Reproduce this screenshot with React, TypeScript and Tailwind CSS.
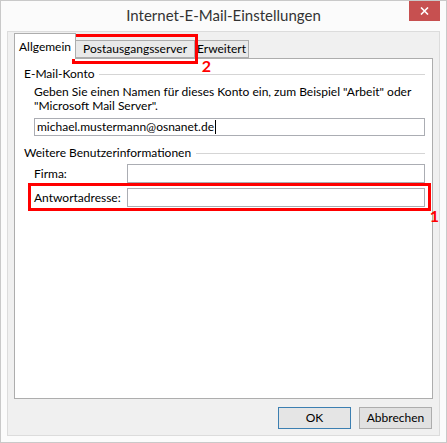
import React from "react";

const font = { fontFamily: '"Segoe UI", Lato, "Noto Sans", sans-serif' };

function GroupTitle({ label }: { label: string }) {
  return (
    <div className="flex h-[16px] items-center gap-[5px]">
      <span>{label}</span>
      <div className="h-px flex-1 bg-[#d5d5d5]" />
    </div>
  );
}

export default function App() {
  return (
    <div
      className="flex h-[443px] w-[447px] flex-col border border-[#c9c9c9] bg-[#fbfbfb] text-[12px] leading-[14px] text-black"
      style={font}
    >
      {/* title bar */}
      <div className="relative flex h-[30px] shrink-0 items-center justify-center">
        <span className="pb-[2px] text-[15px] text-[#333]">Internet-E-Mail-Einstellungen</span>
        <button className="absolute right-[6px] top-0 flex h-[20px] w-[31px] items-center justify-center bg-[#c75050]">
          <svg width="9" height="8" viewBox="0 0 9 8">
            <path d="M1 0.5 L8 7.5 M8 0.5 L1 7.5" stroke="white" strokeWidth="1.6" />
          </svg>
        </button>
      </div>

      {/* client area */}
      <div className="mx-[6px] mb-[6px] flex flex-1 flex-col border border-[#dcdcdc] bg-[#f0f0f0] px-[6px]">
        {/* tabs */}
        <div className="relative flex h-[26px] items-end">
          <div className="relative z-10 -mb-px flex h-[26px] items-center border border-b-0 border-[#adadad] bg-white px-[4px] pt-[1px]">
            Allgemein
          </div>
          <div className="relative ml-[-1px] flex h-[18px] items-center border border-[#adadad] bg-[#e9e9e9] pl-[7px] pr-[7px]">
            Postausgangsserver
            <div className="pointer-events-none absolute left-[-4px] top-[-7px] bottom-[-7px] right-[-4px] border-[3px] border-[#ff0000]" />
            <span className="absolute right-[-17px] top-[17px] text-[16px] font-bold leading-none text-[#ff0000]">2</span>
          </div>
          <div className="ml-[-1px] flex h-[18px] items-center border border-[#adadad] bg-[#e9e9e9] px-[2px]">
            Erweitert
          </div>
        </div>

        {/* panel */}
        <div className="flex h-[341px] flex-col border border-[#adadad] bg-white pl-[9px] pr-[7px] pt-[7px]">
          <GroupTitle label="E-Mail-Konto" />
          <div className="pl-[10px] pt-[3px]">
            <p className="leading-[14px]">
              Geben Sie einen Namen für dieses Konto ein, zum Beispiel "Arbeit" oder
              <br />
              "Microsoft Mail Server".
            </p>
            <div className="mt-[5px] flex h-[18px] items-center border border-[#abadb3] pl-[2px]">
              michael.mustermann@osnanet.de
              <span className="ml-px h-[14px] w-px bg-black" />
            </div>
          </div>

          <div className="mt-[9px]">
            <GroupTitle label="Weitere Benutzerinformationen" />
          </div>

          <div className="flex flex-col pl-[10px] pt-[3px]">
            <div className="flex items-center">
              <span className="w-[93px]">Firma:</span>
              <div className="h-[19px] flex-1 border border-[#abadb3]" />
            </div>
            <div className="relative mt-[5px] flex items-center">
              <span className="w-[93px]">Antwortadresse:</span>
              <div className="h-[19px] flex-1 border border-[#abadb3]" />
              <div className="pointer-events-none absolute left-[-6px] right-[-6px] top-[-5px] h-[28px] border-[3px] border-[#ff0000]" />
              <span className="absolute right-[-14px] top-[20px] text-[16px] font-bold leading-none text-[#ff0000]">1</span>
            </div>
          </div>
        </div>

        {/* buttons */}
        <div className="mt-[8px] flex justify-end gap-[8px] pr-[1px]">
          <button className="h-[22px] w-[73px] border border-[#3c7fb1] bg-[#e5e5e5]">OK</button>
          <button className="h-[22px] w-[73px] border border-[#adadad] bg-[#e1e1e1]">Abbrechen</button>
        </div>
      </div>
    </div>
  );
}
